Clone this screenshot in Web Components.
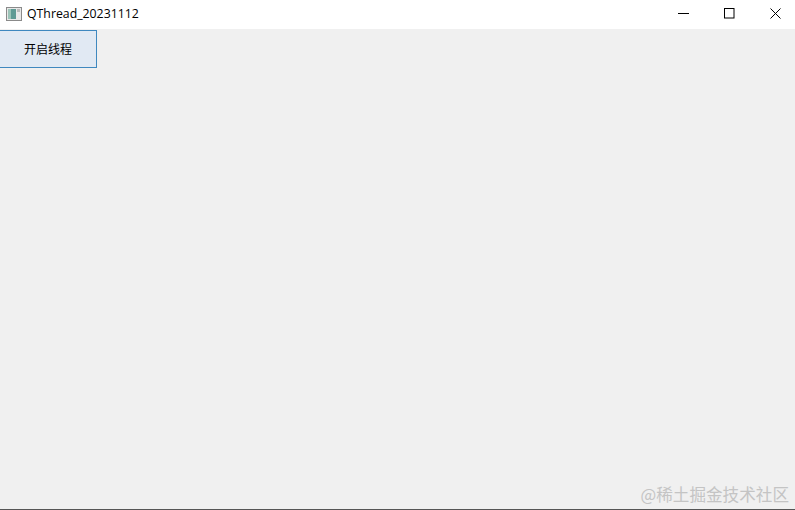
<!DOCTYPE html>
<html lang="zh">
<head>
<meta charset="utf-8">
<title>QThread_20231112</title>
<style>
    html, body { margin: 0; height: 100%; background: #f0f0f0; }
</style>
</head>
<body>
<qt-window caption="QThread_20231112">
    <qt-button>开启线程</qt-button>
</qt-window>

<template id="TEMPLATE_WINDOW">
    <style>
        :host {
            display: flex;
            flex-direction: column;
            position: relative;
            height: 510px;
            width: 795px;
            overflow: hidden;
            font-family: "Liberation Sans", "Noto Sans CJK SC", sans-serif;
            background: #f0f0f0;
            box-sizing: border-box;
            border-bottom: 1px solid #555;
        }
        #titlebar {
            height: 29px;
            flex: none;
            display: flex;
            align-items: center;
            background: #fff;
            color: #000;
        }
        #appicon { margin-left: 6px; margin-top: -2px; flex: none; }
        #caption { margin-left: 5px; margin-top: -2px; font-family: "Open Sans", sans-serif; font-size: 12.3px; flex: 1; }
        .ctl { width: 46px; height: 29px; flex: none; display: flex; align-items: center; justify-content: center; margin-top: -3px; }
        .ctl:last-child { margin-right: -3px; }
        #content { flex: 1; padding-top: 1px; }
        #watermark {
            position: absolute;
            right: 6px;
            bottom: 3px;
            font-family: "Noto Sans CJK SC", sans-serif;
            font-size: 16.6px;
            line-height: 24px;
            color: #c4c4c4;
            white-space: nowrap;
        }
    </style>
    <div id="titlebar">
        <svg id="appicon" width="16" height="14" viewBox="0 0 16 14">
            <rect x="0.5" y="0.5" width="15" height="13" fill="#e8e8e8" stroke="#8a8a8a"/>
            <rect x="2" y="2" width="8" height="10" fill="#5f9a94"/>
            <rect x="2" y="2" width="3" height="10" fill="#9cc4b8"/>
            <rect x="11" y="2" width="3" height="3" fill="#bbb"/>
        </svg>
        <span id="caption"></span>
        <div class="ctl"><svg width="11" height="11" viewBox="0 0 11 11"><path d="M0 5.5H11" stroke="#000" fill="none"/></svg></div>
        <div class="ctl"><svg width="11" height="11" viewBox="0 0 11 11"><rect x="0.5" y="0.5" width="9.5" height="9.5" stroke="#000" fill="none"/></svg></div>
        <div class="ctl"><svg width="11" height="11" viewBox="0 0 11 11"><path d="M0.5 0.5L10.5 10.5M10.5 0.5L0.5 10.5" stroke="#000" fill="none"/></svg></div>
    </div>
    <div id="content"><slot></slot></div>
    <div id="watermark">@稀土掘金技术社区</div>
</template>

<template id="TEMPLATE_BUTTON">
    <style>
        :host {
            display: flex;
            align-items: center;
            justify-content: center;
            box-sizing: border-box;
            width: 97px;
            height: 38px;
            padding-bottom: 2px;
            background: #e1e9f3;
            border: 1px solid #3f88bf;
            border-left: none;
            font-family: "Noto Sans CJK SC", sans-serif;
            font-size: 12px;
            color: #000;
        }
    </style>
    <slot></slot>
</template>

<script>
    customElements.define('qt-window', class extends HTMLElement {
        constructor() {
            super()
            const shadow = this.attachShadow({ mode: "open" })
            shadow.append(document.getElementById("TEMPLATE_WINDOW").content.cloneNode(true))
            shadow.getElementById("caption").textContent = this.getAttribute("caption")
        }
    })

    customElements.define('qt-button', class extends HTMLElement {
        constructor() {
            super()
            const shadow = this.attachShadow({ mode: "open" })
            shadow.append(document.getElementById("TEMPLATE_BUTTON").content.cloneNode(true))
        }
    })
</script>
</body>
</html>
